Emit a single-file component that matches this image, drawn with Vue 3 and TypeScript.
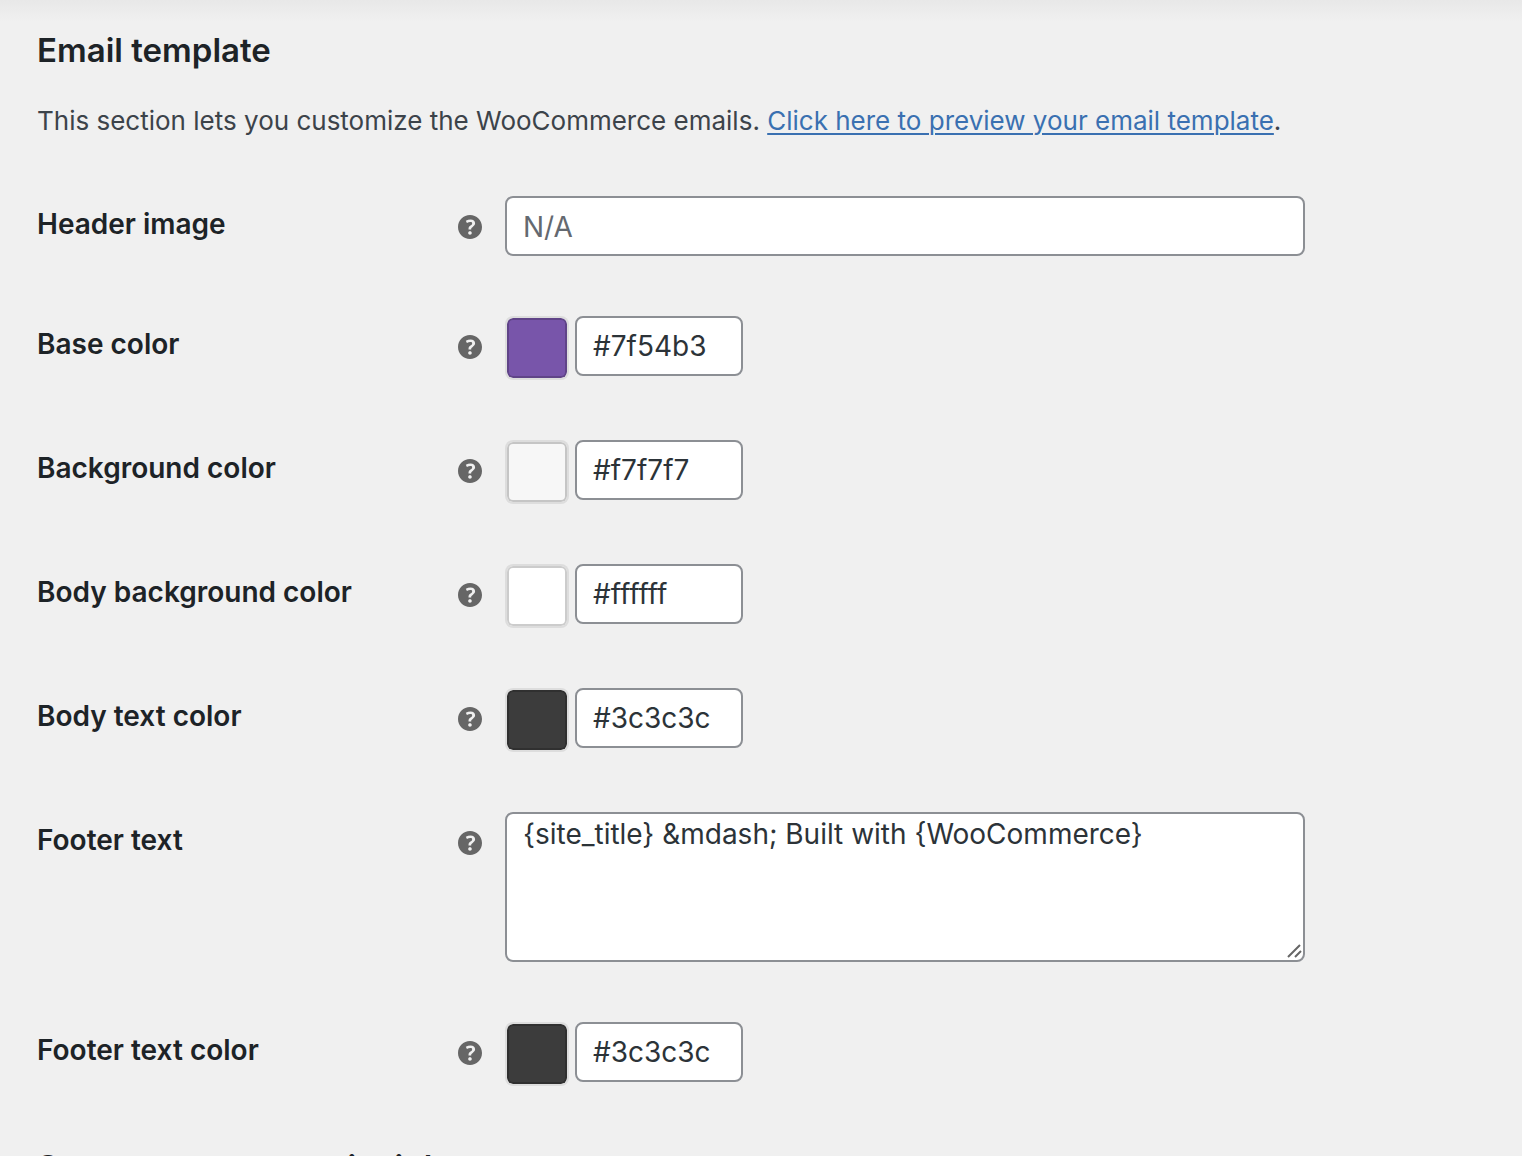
<script setup lang="ts">
import { reactive } from 'vue'

interface Field {
  id: string
  label: string
  kind: 'text' | 'color' | 'textarea'
  value: string
  swatch?: string
  placeholder?: string
}

const fields = reactive<Field[]>([
  { id: 'header-image', label: 'Header image', kind: 'text', value: '', placeholder: 'N/A' },
  { id: 'base-color', label: 'Base color', kind: 'color', value: '#7f54b3', swatch: '#7855aa' },
  { id: 'background-color', label: 'Background color', kind: 'color', value: '#f7f7f7', swatch: '#f7f7f7' },
  { id: 'body-background-color', label: 'Body background color', kind: 'color', value: '#ffffff', swatch: '#ffffff' },
  { id: 'body-text-color', label: 'Body text color', kind: 'color', value: '#3c3c3c', swatch: '#3c3c3c' },
  {
    id: 'footer-text',
    label: 'Footer text',
    kind: 'textarea',
    value: '{site_title} &mdash; Built with {WooCommerce}',
  },
  { id: 'footer-text-color', label: 'Footer text color', kind: 'color', value: '#3c3c3c', swatch: '#3c3c3c' },
])
</script>

<template>
  <main class="settings">
    <h2 class="title">Email template</h2>
    <p class="intro">
      This section lets you customize the WooCommerce emails.
      <a href="#preview">Click here to preview your email template</a>.
    </p>

    <form class="form" @submit.prevent>
      <div v-for="field in fields" :key="field.id" class="row">
        <div class="heading">
          <label class="label" :for="field.id">{{ field.label }}</label>
          <button class="help" type="button" :aria-label="'Help: ' + field.label">
            <svg viewBox="3 3 14 14" aria-hidden="true">
              <path
                d="M17 10c0-3.87-3.14-7-7-7-3.87 0-7 3.13-7 7s3.13 7 7 7c3.86 0 7-3.13 7-7zm-6.3 1.48H9.14v-.43c0-.38.08-.7.24-.98s.46-.57.88-.89c.41-.29.68-.53.81-.71.14-.18.2-.39.2-.62 0-.25-.09-.44-.28-.58-.19-.13-.45-.19-.79-.19-.58 0-1.25.19-2 .57l-.64-1.28c.87-.49 1.8-.74 2.77-.74.81 0 1.45.2 1.92.58.48.39.71.91.71 1.55 0 .43-.09.8-.29 1.11-.19.32-.57.67-1.11 1.06-.38.28-.61.49-.71.63-.1.15-.15.34-.15.57v.35zm-1.47 2.74c-.18-.17-.27-.42-.27-.73 0-.33.08-.58.26-.75s.43-.25.77-.25c.32 0 .57.09.75.26s.27.42.27.74c0 .3-.09.55-.27.72-.18.18-.43.27-.75.27-.33 0-.58-.09-.76-.26z"
              />
            </svg>
          </button>
        </div>

        <div v-if="field.kind === 'color'" class="color">
          <input
            v-model="field.swatch"
            class="swatch"
            type="color"
            :aria-label="field.label + ' picker'"
          />
          <input :id="field.id" v-model="field.value" class="control code" type="text" />
        </div>
        <div v-else-if="field.kind === 'textarea'" class="area">
          <textarea :id="field.id" v-model="field.value" class="control" spellcheck="false" />
          <svg class="grip" viewBox="0 0 16 16" aria-hidden="true">
            <path d="M1 13 13 1M8 13l6-6" />
          </svg>
        </div>
        <input
          v-else
          :id="field.id"
          v-model="field.value"
          class="control wide"
          type="text"
          :placeholder="field.placeholder"
        />
      </div>
    </form>

    <h2 class="title">Store management insights</h2>
  </main>
</template>

<style>
body {
  margin: 0;
  background: #f0f0f0;
}
</style>

<style scoped>
.settings {
  box-sizing: border-box;
  height: 100vh;
  overflow: hidden;
  padding: 30px 37px 0;
  background: linear-gradient(#e8e8e8, #f0f0f0 22px);
  color: #3c434a;
  font: 26px/40px Inter, 'Liberation Sans', sans-serif;
}

.title {
  margin: 0;
  color: #1d2327;
  font-size: 33px;
  font-weight: 600;
  line-height: 40px;
}

.intro {
  margin: 31px 0 55px;
}

.intro a {
  color: #3a70b1;
  text-decoration-thickness: 2px;
  text-underline-offset: 3px;
}

.form {
  display: flex;
  flex-direction: column;
  gap: 60px;
  margin-bottom: 61px;
}

.row {
  display: grid;
  grid-template-columns: 445px minmax(0, 800px);
  column-gap: 23px;
  align-items: start;
}

.heading {
  display: flex;
  justify-content: space-between;
  align-items: flex-start;
}

.label {
  padding-top: 8px;
  color: #1d2327;
  font-size: 28px;
  font-weight: 600;
  line-height: 40px;
}

.help {
  display: flex;
  margin: 19px 0 0;
  padding: 0;
  border: 0;
  background: none;
}

.help svg {
  width: 24px;
  height: 24px;
  fill: #666;
}

.control {
  box-sizing: border-box;
  display: block;
  width: 100%;
  height: 60px;
  margin: 0;
  padding: 0 16px;
  border: 2px solid #8c8f94;
  border-radius: 8px;
  outline: 0;
  background: #fff;
  color: #2c3338;
  font: 28px/40px Inter, 'Liberation Sans', sans-serif;
}

.wide {
  padding-top: 2px;
}

.control::placeholder {
  color: #646970;
  opacity: 1;
}

.color {
  display: flex;
  gap: 8px;
  align-items: flex-start;
  height: 64px;
}

.code {
  width: 168px;
}

.swatch {
  appearance: none;
  box-sizing: border-box;
  width: 60px;
  height: 60px;
  margin: 2px 0 0 2px;
  padding: 0;
  border: 0;
  border-radius: 6px;
  background: none;
  box-shadow: 0 0 0 2px rgba(0, 0, 0, 0.08);
}

.swatch::-webkit-color-swatch-wrapper {
  padding: 0;
}

.swatch::-webkit-color-swatch {
  box-sizing: border-box;
  border: 2px solid rgba(0, 0, 0, 0.2);
  border-radius: 6px;
}

.area {
  position: relative;
}

.area .control {
  height: 150px;
  resize: none;
}

.grip {
  position: absolute;
  right: 2px;
  bottom: 2px;
  width: 16px;
  height: 16px;
  fill: none;
  stroke: #666;
  stroke-width: 2;
}
</style>
